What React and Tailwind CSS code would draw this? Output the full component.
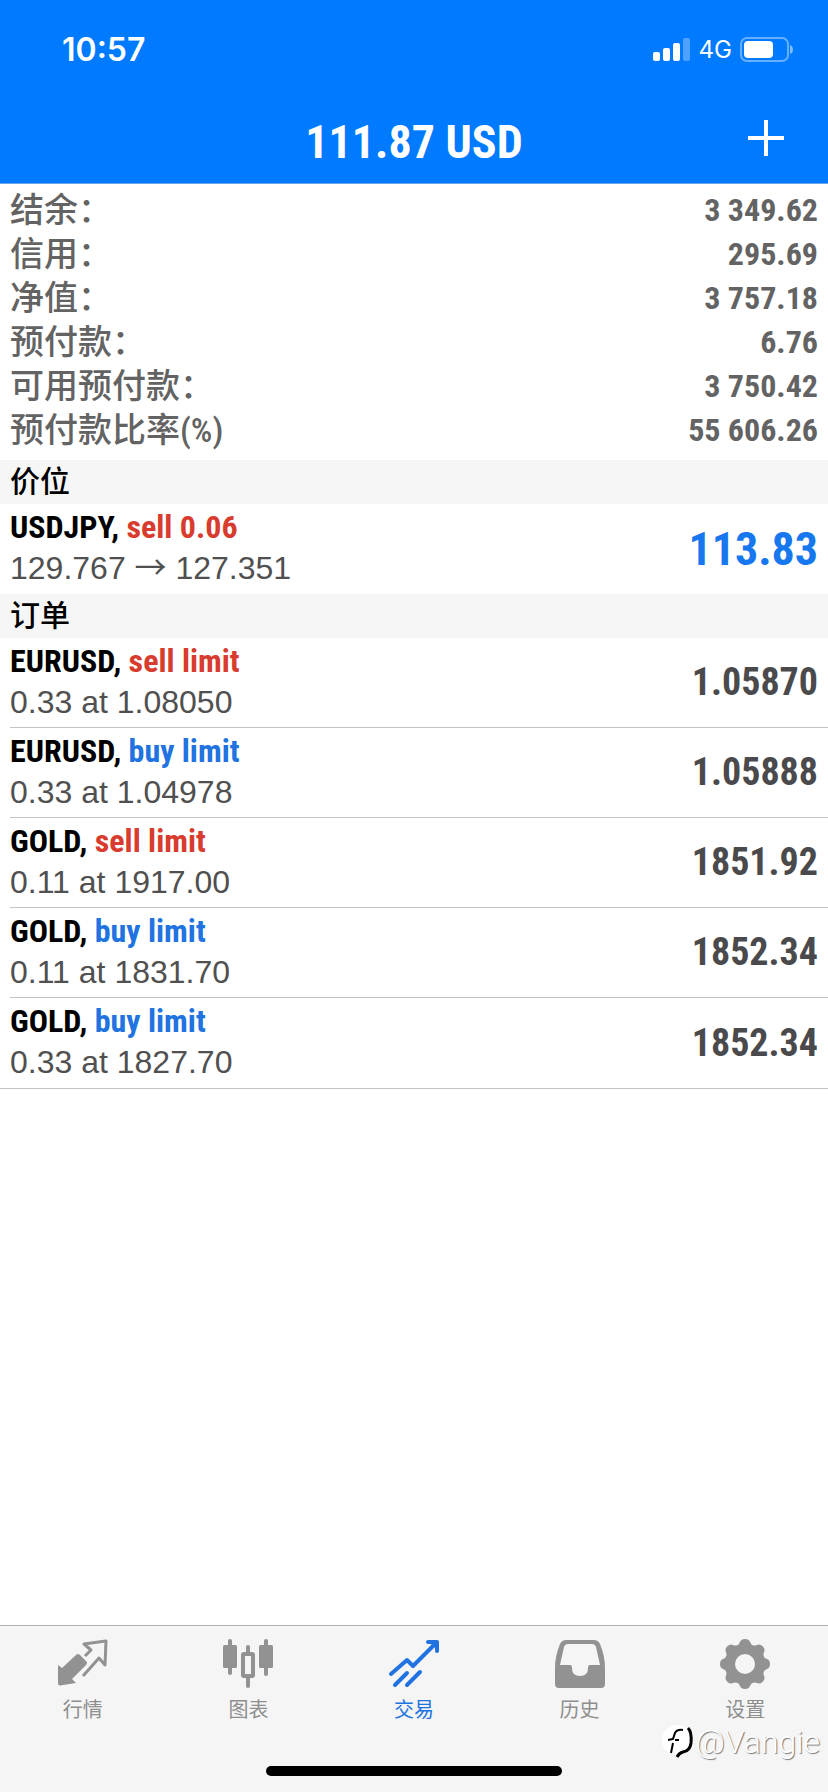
import React from "react";

const summary = [
  { label: "结余：", value: "3 349.62" },
  { label: "信用：", value: "295.69" },
  { label: "净值：", value: "3 757.18" },
  { label: "预付款：", value: "6.76" },
  { label: "可用预付款：", value: "3 750.42" },
  { label: "预付款比率(%)", value: "55 606.26" },
];

const orders = [
  { symbol: "EURUSD", side: "sell", type: "sell limit", detail: "0.33 at 1.08050", price: "1.05870" },
  { symbol: "EURUSD", side: "buy", type: "buy limit", detail: "0.33 at 1.04978", price: "1.05888" },
  { symbol: "GOLD", side: "sell", type: "sell limit", detail: "0.11 at 1917.00", price: "1851.92" },
  { symbol: "GOLD", side: "buy", type: "buy limit", detail: "0.11 at 1831.70", price: "1852.34" },
  { symbol: "GOLD", side: "buy", type: "buy limit", detail: "0.33 at 1827.70", price: "1852.34" },
];

const narrow = "font-['Roboto_Condensed','Noto_Sans_CJK_SC',sans-serif]";
const narrowMedium = "font-['Roboto_Condensed','Noto_Sans_CJK_SC_Medium','Noto_Sans_CJK_SC',sans-serif]";

const QuotesIcon = () => (
  <svg width="52" height="50" viewBox="0 0 52 50" aria-hidden="true">
    <path d="M1 27 L5 30 L19 17 Q21 15 23 17 L29 23 Q31 25 29 27 L15 41 L19 45 L3 47.500 Q1 47.500 1 45.500 Z" fill="#929292" />
    <path
      d="M28 18 L34 12 L27 6 L49 3 L48 27 L42 20 L26 38"
      fill="none"
      stroke="#929292"
      strokeWidth="3"
      strokeLinejoin="round"
    />
  </svg>
);

const ChartIcon = () => (
  <svg width="52" height="50" viewBox="0 0 52 50" aria-hidden="true">
    <g fill="#929292">
      <rect x="1" y="7" width="14" height="23" rx="1.500" />
      <rect x="6" y="1" width="4" height="36" rx="2" />
      <rect x="37" y="7" width="14" height="23" rx="1.500" />
      <rect x="42" y="1" width="4" height="37" rx="2" />
      <rect x="24" y="7" width="4" height="9" rx="2" />
      <rect x="24" y="38" width="4" height="12" rx="2" />
    </g>
    <rect x="21" y="16" width="10" height="22" rx="1" fill="none" stroke="#929292" strokeWidth="4" />
  </svg>
);

const TradeIcon = () => (
  <svg width="52" height="50" viewBox="0 0 52 50" aria-hidden="true">
    <g fill="none" stroke="#2073e0" strokeWidth="4" strokeLinecap="round" strokeLinejoin="round">
      <path d="M3 36 L19 22 L25 28 L47 6" />
      <path d="M40 4 H49 V13" />
      <path d="M7 47 L19 35 M19 47 L32 34" />
    </g>
    <path d="M40 3 H50 V13 Z" fill="#2073e0" />
  </svg>
);

const HistoryIcon = () => (
  <svg width="52" height="50" viewBox="0 0 52 50" aria-hidden="true">
    <path
      fillRule="evenodd"
      d="M12 2 H40 Q44 2 46 6 Q51 18 51 30 V46 Q51 50 47 50 H5 Q1 50 1 46 V30 Q1 18 6 6 Q8 2 12 2 Z M14 6 Q11 6 10 9 L6 27 H16 Q18 27 18 30 Q18 38 26 38 Q34 38 34 30 Q34 27 36 27 H46 L42 9 Q41 6 38 6 Z"
      fill="#929292"
    />
  </svg>
);

const GearIcon = () => (
  <svg width="52" height="52" viewBox="0 0 52 52" aria-hidden="true">
    <g fill="#929292">
      {[0, 45, 90, 135, 180, 225, 270, 315].map((angle) => (
        <path
          key={angle}
          d="M17 8 Q20 7 21 4 Q22 1 26 1 Q30 1 31 4 Q32 7 35 8 L32 20 H20 Z"
          transform={`rotate(${angle} 26 26)`}
        />
      ))}
    </g>
    <circle cx="26" cy="26" r="15" fill="none" stroke="#929292" strokeWidth="9" />
    <circle cx="26" cy="26" r="10" fill="#f5f5f5" />
  </svg>
);

const tabs = [
  { label: "行情", Icon: QuotesIcon },
  { label: "图表", Icon: ChartIcon },
  { label: "交易", Icon: TradeIcon, active: true },
  { label: "历史", Icon: HistoryIcon },
  { label: "设置", Icon: GearIcon },
];

const StatusBar = () => (
  <div className="flex h-[100px] items-center justify-between pl-[62px] pr-[34px] text-white">
    <span className="font-['Inter',sans-serif] text-[32px] font-semibold leading-10">10:57</span>
    <div className="flex items-center gap-2">
      <svg width="38" height="24" viewBox="0 0 38 24" aria-hidden="true">
        <g fill="#fff">
          <rect x="0" y="14" width="7" height="9" rx="2" />
          <rect x="10" y="10" width="7" height="13" rx="2" />
          <rect x="20" y="5" width="7" height="18" rx="2" />
          <rect x="30" y="0" width="7" height="23" rx="2" opacity="0.3" />
        </g>
      </svg>
      <span className="font-['Inter',sans-serif] text-2xl">4G</span>
      <svg width="54" height="26" viewBox="0 0 54 26" aria-hidden="true">
        <rect x="1" y="1" width="47" height="23" rx="6" fill="none" stroke="#fff" strokeOpacity="0.4" strokeWidth="2" />
        <rect x="4" y="4" width="29" height="17" rx="4" fill="#fff" />
        <path d="M50 8 Q53 9 53 12.500 Q53 16 50 17 Z" fill="#fff" fillOpacity="0.5" />
      </svg>
    </div>
  </div>
);

const SectionTitle = ({ children }) => (
  <h2 className="bg-[#f6f6f6] px-[10px] text-[30px] font-medium leading-[44px] text-black">{children}</h2>
);

const TradeRow = ({ symbol, side, type, detail, price, priceClass }) => (
  <div className="flex h-[90px] items-center justify-between pr-[10px]">
    <div className="pb-1">
      <div className={`${narrow} text-[32px] font-bold leading-[42px] text-black`}>
        {symbol}, <span className={side === "sell" ? "text-[#d83c2e]" : "text-[#2073e0]"}>{type}</span>
      </div>
      <div className="text-[32px] leading-10 text-[#505050]">{detail}</div>
    </div>
    <div className={`${narrow} font-bold ${priceClass}`}>{price}</div>
  </div>
);

export default function App() {
  return (
    <div className="flex min-h-screen flex-col bg-white font-['Liberation_Sans','Noto_Sans_CJK_SC',sans-serif]">
      <header className="border-b border-[#6aa6f0] bg-[#007aff]">
        <StatusBar />
        <div className="grid h-[83px] grid-cols-[1fr_auto_1fr] items-center text-white">
          <h1 className={`${narrow} col-start-2 text-[46px] font-bold leading-[54px]`}>111.87 USD</h1>
          <button type="button" aria-label="新订单" className="mb-2 mr-11 justify-self-end">
            <svg width="36" height="36" viewBox="0 0 36 36" aria-hidden="true">
              <path d="M18 0 V36 M0 18 H36" stroke="#fff" strokeWidth="4" />
            </svg>
          </button>
        </div>
      </header>

      <main className="flex-1">
        <dl className="px-[10px] pb-2 pt-1 leading-[44px] text-[#636363]">
          {summary.map((row) => (
            <div key={row.label} className="flex justify-between">
              <dt className={`${narrowMedium} text-[34px] font-medium`}>{row.label}</dt>
              <dd className={`${narrow} text-[32px] font-bold`}>{row.value}</dd>
            </div>
          ))}
        </dl>

        <SectionTitle>价位</SectionTitle>
        <div className="pl-[10px]">
          <TradeRow
            symbol="USDJPY"
            side="sell"
            type="sell 0.06"
            detail={
              <>
                129.767 <span className="font-['Noto_Sans_CJK_SC',sans-serif] leading-6">→</span> 127.351
              </>
            }
            price="113.83"
            priceClass="text-[46px] text-[#1777ee]"
          />
        </div>

        <SectionTitle>订单</SectionTitle>
        <div className="border-b border-[#c4c4c4] pl-[10px]">
          <div className="divide-y divide-[#c4c4c4]">
            {orders.map((order, i) => (
              <TradeRow key={i} {...order} priceClass="text-[38px] text-[#4a4a4c]" />
            ))}
          </div>
        </div>
      </main>

      <footer className="relative border-t border-[#b0b0b0] bg-[#f5f5f5]">
        <nav className="grid grid-cols-5 pt-3">
          {tabs.map(({ label, Icon, active }) => (
            <button
              key={label}
              type="button"
              className={`flex flex-col items-center gap-1 text-xl leading-8 ${active ? "text-[#2073e0]" : "text-[#8e8e8e]"}`}
            >
              <span className="flex h-[52px] items-start">
                <Icon />
              </span>
              {label}
            </button>
          ))}
        </nav>
        <div className="mx-auto mb-4 mt-10 h-[10px] w-[296px] rounded-full bg-black" />
        <div className="absolute right-2 top-[98px] flex items-center">
          <svg width="34" height="36" viewBox="0 0 34 36" aria-hidden="true">
            <circle cx="16" cy="16" r="15" fill="#fff" />
            <path d="M10 29 L12 19 M7 16 L12 15 L14 9 Q16 5 22 6 M14 16 H18" fill="none" stroke="#000" strokeWidth="2" />
            <path d="M27 4 Q31 8 30 19 Q29 27 22 28 Q18 29 16 33" fill="none" stroke="#000" strokeWidth="3" />
          </svg>
          <span className="font-['Roboto',sans-serif] text-[32px] font-light leading-9 text-white [text-shadow:1px_1px_1px_#777]">
            @Vangie
          </span>
        </div>
      </footer>
    </div>
  );
}
